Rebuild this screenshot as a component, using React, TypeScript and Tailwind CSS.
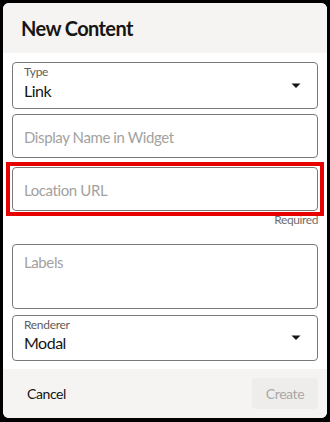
import React from "react";

const font = { fontFamily: 'Lato, "Noto Sans", sans-serif' };

function Caret() {
  return (
    <svg width="10" height="6" viewBox="0 0 10 6" className="shrink-0">
      <path d="M0.5 0.5 L9.5 0.5 L5 5 Z" fill="#161513" />
    </svg>
  );
}

export default function App() {
  return (
    <div className="w-[330px] h-[422px] bg-black p-[3px]" style={font}>
      <div className="w-[324px] h-[415px] bg-white rounded-[6px] overflow-hidden flex flex-col">
        <div className="h-[50px] bg-[#f5f4f2] flex items-center px-[18px] shrink-0">
          <h1 className="text-[20px] font-bold tracking-[-0.6px] text-[#161513] leading-none">New Content</h1>
        </div>
        <div className="flex-1 flex flex-col px-[9px] pt-[9px]">
          <div className="h-[47px] border border-[#7b7a78] rounded-[4px] flex items-center pl-[11px] pr-[16px]">
            <div className="flex-1 flex flex-col self-start pt-[2px] gap-[2px]">
              <span className="text-[12px] leading-[14px] tracking-[-0.3px] text-[#5e5d5b]">Type</span>
              <span className="text-[16px] leading-[20px] tracking-[-0.5px] text-[#161513]">Link</span>
            </div>
            <Caret />
          </div>
          <div className="mt-[5px] h-[44px] border border-[#7b7a78] rounded-[4px] flex items-center pl-[11px] pt-[2px]">
            <span className="text-[15px] tracking-[-0.4px] text-[#a3a2a0]">Display Name in Widget</span>
          </div>
          <div className="relative mt-[9px] h-[44px] border border-[#7b7a78] rounded-[4px] flex items-center pl-[11px] pt-[2px]">
            <span className="text-[15px] tracking-[-0.4px] text-[#a3a2a0]">Location URL</span>
            <div className="absolute -left-[7px] -right-[7px] -top-[6px] -bottom-[6px] border-4 border-[#e60000]" />
          </div>
          <div className="flex justify-end mt-[2px] h-[14px]">
            <span className="text-[12px] leading-[14px] tracking-[-0.4px] text-[#6f6e6c]">Required</span>
          </div>
          <div className="mt-[17px] h-[65px] border border-[#7b7a78] rounded-[4px] pl-[11px] pt-[5px]">
            <span className="text-[15px] leading-[20px] tracking-[-0.4px] text-[#a3a2a0]">Labels</span>
          </div>
          <div className="mt-[6px] h-[46px] border border-[#7b7a78] rounded-[4px] flex items-center pl-[11px] pr-[16px]">
            <div className="flex-1 flex flex-col self-start pt-[2px] gap-[1px]">
              <span className="text-[12px] leading-[14px] tracking-[-0.3px] text-[#5e5d5b]">Renderer</span>
              <span className="text-[16px] leading-[20px] tracking-[-0.5px] text-[#161513]">Modal</span>
            </div>
            <Caret />
          </div>
        </div>
        <div className="h-[49px] bg-[#f5f4f2] flex items-center justify-between pl-[24px] pr-[9px] shrink-0">
          <span className="text-[14px] tracking-[-0.4px] text-[#161513]">Cancel</span>
          <button className="w-[66px] h-[31px] rounded-[4px] bg-[#eeedeb] text-[14px] tracking-[-0.4px] text-[#a9a8a6]">Create</button>
        </div>
      </div>
    </div>
  );
}
